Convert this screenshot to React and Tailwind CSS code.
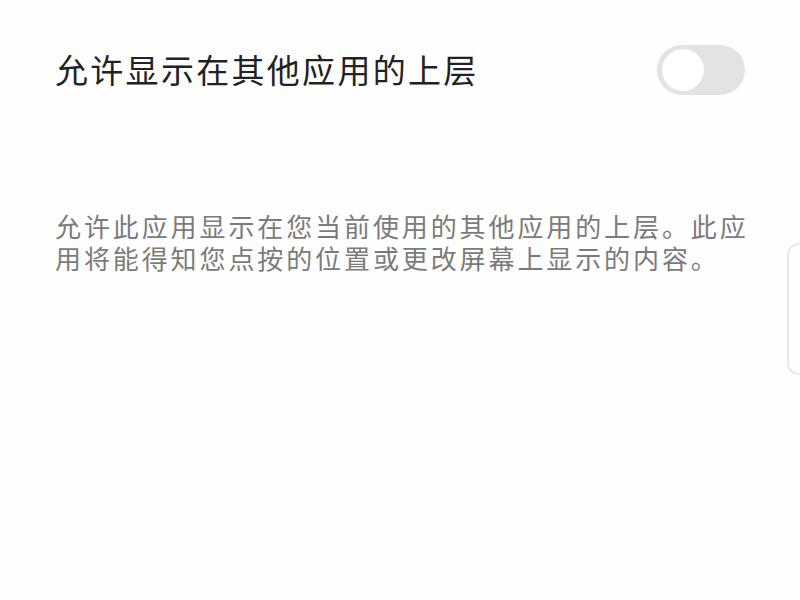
import React from 'react';

export default function App() {
  return (
    <div
      className="relative w-[800px] h-[600px] overflow-hidden bg-[#fefefe]"
      style={{ fontFamily: '"Noto Sans CJK SC", "Noto Sans", sans-serif' }}
    >
      {/* Permission toggle row */}
      <div className="flex items-center justify-between pl-[55px] pr-[55px] pt-[45px]">
        <span className="-mt-[3px] text-[33px] leading-[50px] tracking-[2.3px] text-[#222222]">
          允许显示在其他应用的上层
        </span>
        <button className="relative w-[88px] h-[50px] rounded-full bg-[#e3e3e3]">
          <span className="absolute left-[5px] top-[4px] w-[42px] h-[42px] rounded-full bg-white" />
        </button>
      </div>

      {/* Explanation */}
      <p className="mt-[115px] pl-[55px] pr-[45px] text-[26px] leading-[32px] tracking-[2.9px] text-[#7b7b7b]">
        允许此应用显示在您当前使用的其他应用的上层。此应用将能得知您点按的位置或更改屏幕上显示的内容。
      </p>

      {/* Edge panel handle */}
      <div className="absolute left-[787px] top-[243px] w-[40px] h-[132px] rounded-[12px] border-2 border-[#e8e8e8]" />
    </div>
  );
}
